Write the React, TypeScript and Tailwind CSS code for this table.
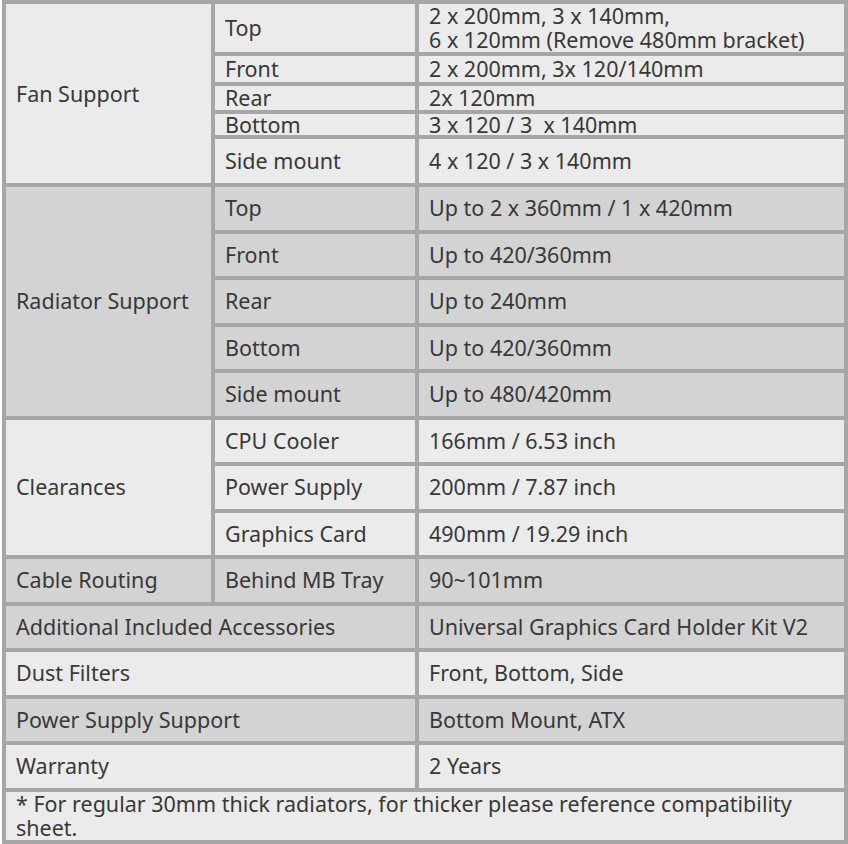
import React from "react";

type Sub = { label: string; value: React.ReactNode; h: string; lead?: string };
type Group = { title: string; dark: boolean; rows: Sub[] };

const groups: Group[] = [
  {
    title: "Fan Support",
    dark: false,
    rows: [
      {
        label: "Top",
        value: (
          <>
            2 x 200mm, 3 x 140mm,
            <br />6 x 120mm (Remove 480mm bracket)
          </>
        ),
        h: "h-[48px]",
      },
      { label: "Front", value: "2 x 200mm, 3x 120/140mm", h: "h-[26px]" },
      { label: "Rear", value: "2x 120mm", h: "h-[24px]" },
      { label: "Bottom", value: "3 x 120 / 3\u00a0 x 140mm", h: "h-[21px]", lead: "leading-[20px]" },
      { label: "Side mount", value: "4 x 120 / 3 x 140mm", h: "h-[44px]" },
    ],
  },
  {
    title: "Radiator Support",
    dark: true,
    rows: [
      { label: "Top", value: "Up to 2 x 360mm / 1 x 420mm", h: "h-[42.5px]" },
      { label: "Front", value: "Up to 420/360mm", h: "h-[42.5px]" },
      { label: "Rear", value: "Up to 240mm", h: "h-[42.5px]" },
      { label: "Bottom", value: "Up to 420/360mm", h: "h-[42.5px]" },
      { label: "Side mount", value: "Up to 480/420mm", h: "h-[42.5px]" },
    ],
  },
  {
    title: "Clearances",
    dark: false,
    rows: [
      { label: "CPU Cooler", value: "166mm / 6.53 inch", h: "h-[42.5px]" },
      { label: "Power Supply", value: "200mm / 7.87 inch", h: "h-[42.5px]" },
      { label: "Graphics Card", value: "490mm / 19.29 inch", h: "h-[42.5px]" },
    ],
  },
  {
    title: "Cable Routing",
    dark: true,
    rows: [{ label: "Behind MB Tray", value: "90~101mm", h: "h-[42.5px]" }],
  },
];

const simple: { label: string; value: string; dark: boolean }[] = [
  { label: "Additional Included Accessories", value: "Universal Graphics Card Holder Kit V2", dark: true },
  { label: "Dust Filters", value: "Front, Bottom, Side", dark: false },
  { label: "Power Supply Support", value: "Bottom Mount, ATX", dark: true },
  { label: "Warranty", value: "2 Years", dark: false },
];

const light = "bg-[#ebebeb]";
const dark = "bg-[#d3d3d3]";
const cell = "px-[10px] py-0 align-middle";

export default function App() {
  return (
    <div className="w-[848px] h-[844px] overflow-hidden bg-white pl-[2px]">
      <table
        className="w-[846px] table-fixed border-separate border-spacing-[4px] bg-[#a6a6a6] text-[21.5px] leading-[24px] text-[#383838]"
        style={{ fontFamily: '"Noto Sans", "Open Sans", sans-serif' }}
      >
        <colgroup>
          <col className="w-[205px]" />
          <col className="w-[200px]" />
          <col />
        </colgroup>
        <tbody>
          {groups.map((g) =>
            g.rows.map((r, i) => (
              <tr key={g.title + r.label} className={r.h}>
                {i === 0 && (
                  <td rowSpan={g.rows.length} className={`${cell} ${g.dark ? dark : light}`}>
                    {g.title}
                  </td>
                )}
                <td className={`${cell} ${r.lead ?? ""} ${g.dark ? dark : light}`}>{r.label}</td>
                <td className={`${cell} ${r.lead ?? ""} ${g.dark ? dark : light} ${i === 0 && g.title === "Fan Support" ? "align-top" : ""}`}>
                  {r.value}
                </td>
              </tr>
            ))
          )}
          {simple.map((s) => (
            <tr key={s.label} className="h-[42.5px]">
              <td colSpan={2} className={`${cell} ${s.dark ? dark : light}`}>
                {s.label}
              </td>
              <td className={`${cell} ${s.dark ? dark : light}`}>{s.value}</td>
            </tr>
          ))}
          <tr className="h-[48px]">
            <td colSpan={3} className={`${cell} align-top ${light}`}>
              * For regular 30mm thick radiators, for thicker please reference compatibility sheet.
            </td>
          </tr>
        </tbody>
      </table>
    </div>
  );
}
